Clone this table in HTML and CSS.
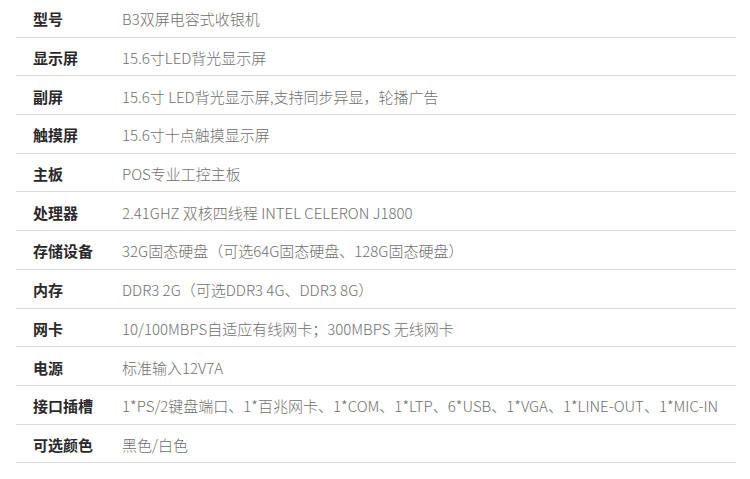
FILE: index.html
```html
<!DOCTYPE html>
<html lang="zh">
<head>
<meta charset="utf-8">
<link rel="stylesheet" href="styles.css">
</head>
<body>
<div class="spec">
  <div class="row"><div class="label">型号</div><div class="value">B3双屏电容式收银机</div></div>
  <div class="row"><div class="label">显示屏</div><div class="value">15.6寸LED背光显示屏</div></div>
  <div class="row"><div class="label">副屏</div><div class="value">15.6寸 LED背光显示屏,支持同步异显，轮播广告</div></div>
  <div class="row"><div class="label">触摸屏</div><div class="value">15.6寸十点触摸显示屏</div></div>
  <div class="row"><div class="label">主板</div><div class="value">POS专业工控主板</div></div>
  <div class="row"><div class="label">处理器</div><div class="value">2.41GHZ 双核四线程 INTEL CELERON J1800</div></div>
  <div class="row"><div class="label">存储设备</div><div class="value">32G固态硬盘（可选64G固态硬盘、128G固态硬盘）</div></div>
  <div class="row"><div class="label">内存</div><div class="value">DDR3 2G（可选DDR3 4G、DDR3 8G）</div></div>
  <div class="row"><div class="label">网卡</div><div class="value">10/100MBPS自适应有线网卡；300MBPS 无线网卡</div></div>
  <div class="row"><div class="label">电源</div><div class="value">标准输入12V7A</div></div>
  <div class="row"><div class="label">接口插槽</div><div class="value">1*PS/2键盘端口、1*百兆网卡、1*COM、1*LTP、6*USB、1*VGA、1*LINE-OUT、1*MIC-IN</div></div>
  <div class="row"><div class="label">可选颜色</div><div class="value">黑色/白色</div></div>
</div>
</body>
</html>
```
FILE: styles.css
```css
html, body {
  margin: 0;
  padding: 0;
  background: #fff;
}
.spec {
  margin-left: 16px;
  width: 720px;
  margin-top: -1px;
  font-family: "Noto Sans CJK SC", "Noto Sans", sans-serif;
}
.row {
  display: flex;
  align-items: center;
  box-sizing: border-box;
  height: 38.7px;
  border-bottom: 1px solid #dcdcdc;
}
.label {
  box-sizing: border-box;
  width: 106px;
  padding-left: 17px;
  padding-top: 2px;
  flex-shrink: 0;
  font-size: 15px;
  font-weight: 700;
  color: #2a2a2a;
}
.value {
  font-size: 15px;
  font-weight: 300;
  color: #707070;
  white-space: nowrap;
  padding-top: 2px;
}
```
